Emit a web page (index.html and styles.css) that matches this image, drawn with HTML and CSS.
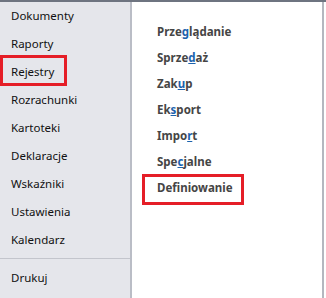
FILE: index.html
```html
<!DOCTYPE html>
<html lang="pl">
<head>
    <meta charset="UTF-8">
    <title>Menu</title>
    <link rel="stylesheet" href="styles.css">
</head>
<body>

    <div class="window">
        <ul class="side">
            <li>Dokumenty</li>
            <li>Raporty</li>
            <li>Rejestry</li>
            <li>Rozrachunki</li>
            <li>Kartoteki</li>
            <li>Deklaracje</li>
            <li>Wskaźniki</li>
            <li>Ustawienia</li>
            <li>Kalendarz</li>
            <li class="after-sep">Drukuj</li>
        </ul>

        <ul class="sub">
            <li>Prze<u>g</u>lądanie</li>
            <li>Sprze<u>d</u>aż</li>
            <li>Zak<u>u</u>p</li>
            <li>Ek<u>s</u>port</li>
            <li>Impo<u>r</u>t</li>
            <li>Spe<u>c</u>jalne</li>
            <li>Def<u>i</u>niowanie</li>
        </ul>

        <div class="mark mark-rejestry"></div>
        <div class="mark mark-def"></div>
    </div>

</body>
</html>
```

FILE: styles.css
```css
html, body {
    margin: 0;
    padding: 0;
    background: #fff;
}

.window {
    position: relative;
    display: flex;
    width: 326px;
    height: 298px;
    box-sizing: border-box;
    border-top: 2px solid #6e7480;
    font-family: 'Noto Sans', 'Open Sans', sans-serif;
}

ul {
    list-style: none;
    margin: 0;
    padding: 0;
}

.side {
    width: 130px;
    background: #e5e6eb;
    border-right: 2px solid #babdc6;
    font-size: 11.5px;
    color: #111;
}

.side li {
    height: 28px;
    line-height: 28px;
    padding-left: 11px;
}

.side .after-sep {
    margin-top: 4px;
    padding-top: 10px;
    height: 18px;
    line-height: 18px;
    border-top: 1px solid #c3c5cc;
}

.sub {
    flex: 1;
    padding: 17px 0 0 25px;
    border-right: 2px solid #b4b7bf;
    margin-right: 2px;
    font-size: 11.5px;
    font-weight: bold;
    color: #454545;
}

.sub li {
    height: 26px;
    line-height: 26px;
}

.sub u {
    color: #1b62ad;
    text-decoration-thickness: 1px;
    text-underline-offset: 1px;
}

/* annotation boxes */
.mark {
    position: absolute;
    border: 3px solid #e51e27;
    box-sizing: border-box;
}

.mark-rejestry {
    left: 0;
    top: 53px;
    width: 67px;
    height: 31px;
}

.mark-def {
    left: 142px;
    top: 172px;
    width: 102px;
    height: 31px;
}
```
